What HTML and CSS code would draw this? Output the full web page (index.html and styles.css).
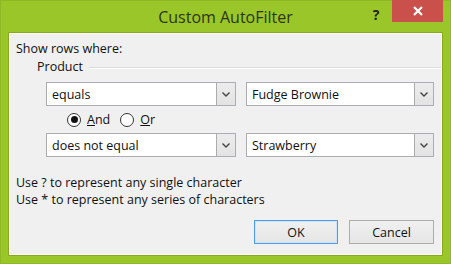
FILE: index.html
```html
<!DOCTYPE html>
<html lang="en">
<head>
    <meta charset="UTF-8">
    <meta name="viewport" content="width=device-width, initial-scale=1.0">
    <title>Custom AutoFilter</title>

    <link rel="stylesheet" href="styles.css">
</head>
<body>

    <div class="window">
        <div class="titlebar">
            <span class="title">Custom AutoFilter</span>
            <span class="help">?</span>
            <span class="close">
                <svg width="12" height="12" viewBox="0 0 12 12">
                    <path d="M2 2 L10 10 M10 2 L2 10" stroke="#fff" stroke-width="2.2" fill="none"/>
                </svg>
            </span>
        </div>

        <div class="panel">
            <div class="caption">Show rows where:</div>

            <div class="group">
                <span class="group-label">Product</span>
                <span class="group-line"></span>
            </div>

            <div class="criteria">
                <div class="combo">
                    <span class="combo-text">equals</span>
                    <span class="combo-btn"><svg width="8" height="5" viewBox="0 0 8 5"><path d="M0.5 0.5 L4 4 L7.5 0.5" stroke="#444" stroke-width="1.4" fill="none"/></svg></span>
                </div>
                <div class="combo">
                    <span class="combo-text">Fudge Brownie</span>
                    <span class="combo-btn"><svg width="8" height="5" viewBox="0 0 8 5"><path d="M0.5 0.5 L4 4 L7.5 0.5" stroke="#444" stroke-width="1.4" fill="none"/></svg></span>
                </div>
            </div>

            <div class="radios">
                <label class="radio"><span class="dot checked"></span><span><u>A</u>nd</span></label>
                <label class="radio"><span class="dot"></span><span><u>O</u>r</span></label>
            </div>

            <div class="criteria">
                <div class="combo">
                    <span class="combo-text">does not equal</span>
                    <span class="combo-btn"><svg width="8" height="5" viewBox="0 0 8 5"><path d="M0.5 0.5 L4 4 L7.5 0.5" stroke="#444" stroke-width="1.4" fill="none"/></svg></span>
                </div>
                <div class="combo">
                    <span class="combo-text">Strawberry</span>
                    <span class="combo-btn"><svg width="8" height="5" viewBox="0 0 8 5"><path d="M0.5 0.5 L4 4 L7.5 0.5" stroke="#444" stroke-width="1.4" fill="none"/></svg></span>
                </div>
            </div>

            <div class="hints">
                <p>Use ? to represent any single character</p>
                <p>Use * to represent any series of characters</p>
            </div>

            <div class="buttons">
                <button class="btn default">OK</button>
                <button class="btn">Cancel</button>
            </div>
        </div>
    </div>

</body>
</html>
```

FILE: styles.css
```css
body{
    margin: 0;
    font-family: "Open Sans", "Noto Sans", sans-serif;
    font-size: 12.5px;
    color: #111;
}

.window{
    width: 451px;
    height: 264px;
    box-sizing: border-box;
    background-color: #9bc62a;
    border: 1px solid #8fb826;
    display: flex;
    flex-direction: column;
}

.titlebar{
    height: 32px;
    display: flex;
    align-items: flex-start;
}
.title{
    flex: 1;
    padding-left: 84px;
    text-align: center;
    font-size: 16px;
    line-height: 32px;
    color: #2b3519;
}
.help{
    width: 20px;
    margin-right: 6px;
    text-align: center;
    font-weight: bold;
    font-size: 14px;
    line-height: 28px;
    color: #222;
}
.close{
    width: 51px;
    height: 22px;
    margin-top: -1px;
    margin-right: 7px;
    background-color: #c9504b;
    display: flex;
    align-items: center;
    justify-content: center;
}

.panel{
    flex: 1;
    margin: 0 8px 8px 8px;
    background-color: #f0f0f0;
    border: 1px solid #fbfbfb;
    box-shadow: 0 0 0 1px #86ab22;
    padding: 7px 7px 10px 6px;
    display: flex;
    flex-direction: column;
}

.caption{
    line-height: 16px;
}

.group{
    display: flex;
    align-items: center;
    margin-top: 2px;
    margin-right: -7px;
    padding-left: 21px;
    line-height: 16px;
}
.group-line{
    flex: 1;
    margin-left: 6px;
    margin-top: 1px;
    border-top: 1px solid #dcdcdc;
    border-bottom: 1px solid #fff;
}

.criteria{
    display: grid;
    grid-template-columns: 190px 188px;
    column-gap: 10px;
    padding-left: 30px;
    margin-top: 7px;
}

.combo{
    height: 24px;
    box-sizing: border-box;
    border: 1px solid #abadb3;
    background-color: #fff;
    display: flex;
    align-items: center;
}
.combo-text{
    flex: 1;
    padding-left: 5px;
}
.combo-btn{
    width: 19px;
    height: 22px;
    box-sizing: border-box;
    border-left: 1px solid #acacac;
    background: linear-gradient(#ececec, #e3e3e3);
    display: flex;
    align-items: center;
    justify-content: center;
}

.radios{
    height: 27px;
    display: flex;
    align-items: center;
    padding-left: 51px;
}
.radio{
    display: flex;
    align-items: center;
    margin-right: 10px;
}
.dot{
    width: 14px;
    height: 14px;
    box-sizing: border-box;
    border: 1px solid #333;
    border-radius: 50%;
    background-color: #fff;
    margin-right: 6px;
    position: relative;
}
.dot.checked::after{
    content: "";
    position: absolute;
    left: 2.5px;
    top: 2.5px;
    width: 7px;
    height: 7px;
    border-radius: 50%;
    background-color: #111;
}
.radios + .criteria{
    margin-top: 0;
}

.hints{
    margin-top: 17px;
}
.hints p{
    margin: 0;
    line-height: 17px;
}

.buttons{
    margin-top: auto;
    display: flex;
    justify-content: flex-end;
    gap: 11px;
}
.btn{
    width: 84px;
    height: 24px;
    font-family: inherit;
    font-size: 12.5px;
    color: #111;
    border: 1px solid #adadad;
    background: linear-gradient(#f0f0f0, #e5e5e5);
    padding: 0;
}
.btn.default{
    border-color: #4d9ee8;
    box-shadow: inset 0 0 0 1px #cde4f9;
}
.btn + .btn{
    width: 85px;
}
```
